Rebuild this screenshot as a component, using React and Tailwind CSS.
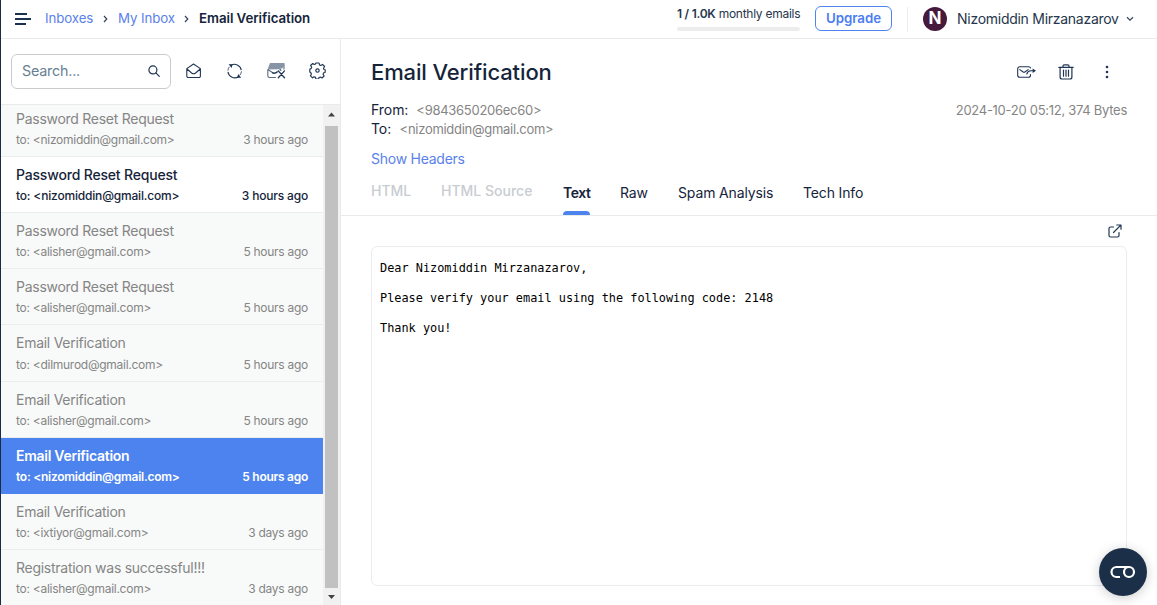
import React from "react";

const messages = [
  { subject: "Password Reset Request", to: "nizomiddin@gmail.com", time: "3 hours ago" },
  { subject: "Password Reset Request", to: "nizomiddin@gmail.com", time: "3 hours ago", state: "unread" },
  { subject: "Password Reset Request", to: "alisher@gmail.com", time: "5 hours ago" },
  { subject: "Password Reset Request", to: "alisher@gmail.com", time: "5 hours ago" },
  { subject: "Email Verification", to: "dilmurod@gmail.com", time: "5 hours ago" },
  { subject: "Email Verification", to: "alisher@gmail.com", time: "5 hours ago" },
  { subject: "Email Verification", to: "nizomiddin@gmail.com", time: "5 hours ago", state: "selected" },
  { subject: "Email Verification", to: "ixtiyor@gmail.com", time: "3 days ago" },
  { subject: "Registration was successful!!!", to: "alisher@gmail.com", time: "3 days ago" },
];

const rowStyles = {
  read: "bg-[#f8faf9] text-[#858585] border-[#ebedec] tracking-[-0.27px]",
  unread: "bg-white text-[#15243a] font-medium border-[#ebedec] tracking-[-0.18px]",
  selected: "bg-[#4c83ee] text-white font-semibold border-[#4c83ee] tracking-[-0.27px]",
};

function Icon({ size = 16, className = "", children, stroke = 1.1 }) {
  return (
    <svg width={size} height={size} viewBox={`0 0 ${size} ${size}`} fill="none" stroke="currentColor" strokeWidth={stroke} strokeLinecap="round" strokeLinejoin="round" className={`shrink-0 ${className}`}>
      {children}
    </svg>
  );
}

function Crumb() {
  return (
    <svg width="5" height="8" viewBox="0 0 5 8" fill="none" stroke="#34445a" strokeWidth="1.2" className="shrink-0">
      <path d="M1 1l2.8 3L1 7" />
    </svg>
  );
}

function Header() {
  return (
    <header className="flex h-[39px] shrink-0 items-center border-b border-[#e9eaeb] pl-3.5 pr-[23px] text-[13.3px]">
      <svg width="17" height="14" viewBox="0 0 17 14" fill="none" stroke="#1a3150" strokeWidth="1.9" className="shrink-0">
        <path d="M0 2h12M0 7h16M0 12h11" />
      </svg>
      <nav className="ml-[13px] flex items-center whitespace-nowrap pb-px">
        <a className="w-[49px] tracking-[-0.1px] text-[#5a82ea]">Inboxes</a>
        <span className="ml-[9px] flex w-[15px]"><Crumb /></span>
        <a className="w-[58px] tracking-[-0.1px] text-[#5a82ea]">My Inbox</a>
        <span className="ml-[8px] flex w-[15px]"><Crumb /></span>
        <span className="font-semibold tracking-[-0.06px] text-[#15243a]">Email Verification</span>
      </nav>
      <div className="ml-auto flex items-center whitespace-nowrap">
        <div className="mb-[3px] w-[123px]">
          <div className="text-xs leading-[18px] tracking-[-0.26px] text-[#26364b]"><b className="font-semibold">1 / 1.0K</b> monthly emails</div>
          <div className="mt-1 h-1 rounded-sm bg-[#ececed]" />
        </div>
        <button className="mb-[2px] ml-[15px] h-[25px] w-[77px] rounded-md border border-[#4c83ee] pt-px text-[13.3px] font-semibold leading-none tracking-[-0.05px] text-[#4c7df0]">Upgrade</button>
        <div className="ml-[15px] h-[25px] w-px bg-[#ececed]" />
        <div className="ml-[15px] flex size-6 items-center justify-center rounded-full bg-[#461a3d] text-[17px] font-bold text-white">N</div>
        <span className="ml-[10px] w-[162px] pb-px text-[14px] tracking-[-0.27px] text-[#26364b]">Nizomiddin Mirzanazarov</span>
        <svg width="8" height="6" viewBox="0 0 8 6" fill="none" stroke="#34445a" strokeWidth="1.2" className="ml-[7px]">
          <path d="M1 1.3l3 2.8 3-2.8" />
        </svg>
      </div>
    </header>
  );
}

function Toolbar() {
  return (
    <div className="flex h-[66px] shrink-0 items-center border-b border-[#e9eaeb] pb-px pl-[10px] text-[#1e3553]">
      <div className="flex h-[35px] w-[160px] items-center justify-between rounded-md border border-[#c9cbce] pl-[10px] pr-[10px]">
        <span className="text-[14.3px] tracking-[-0.2px] text-[#687f93]">Search...</span>
        <Icon size={12} stroke={1.2}>
          <circle cx="4.9" cy="4.9" r="4" />
          <path d="M7.9 7.9l3.4 3.4" />
        </Icon>
      </div>
      <Icon className="mb-px ml-[15px]">
        <path d="M.8 5.600L7.500 1l6.900 4.600V13a1.400 1.400 0 0 1-1.400 1.500H2.300A1.400 1.400 0 0 1 .8 13zM1 6l4.600 4q2 1.500 4 0L14.200 6" />
      </Icon>
      <Icon className="mb-px ml-[25px]">
        <path d="M4 2.300A6.800 6.800 0 0 1 14.200 6.800M11.500 13.700A6.800 6.800 0 0 1 1 9.200" />
        <path d="M.9 7.200a6.800 6.800 0 0 1 1.200-3M14.400 8.800a6.800 6.800 0 0 1-1.200 3" strokeWidth=".8" />
        <path d="M1.600 1.200h4L4.600 5zM14.200 14.800h-4.200L11.300 11z" fill="currentColor" stroke="none" />
      </Icon>
      <Icon size={19} className="ml-[24px]">
        <path d="M8.500 15.500H2.500A1.700 1.700 0 0 1 .8 13.800V8.400A1.700 1.700 0 0 1 2.500 6.700h9.700a1.700 1.700 0 0 1 1.700 1.700M1.200 7.800l4.500 3q1.500 1 3 0l4.800-3M17 2.600v5.400" stroke="#5b6c82" />
        <path d="M3 1h14.600l-.8 3.600-1.700 2H.9z" fill="#8794a5" stroke="none" />
        <path d="M11.300 8.900l6.200 6.900M17.500 8.900l-6.200 6.900" stroke="#fff" strokeWidth="3" />
        <path d="M5.500 10.700q1.700 1 3.500.1l1.500-1" strokeWidth="1.200" />
        <path d="M11.300 8.900l6.200 6.900M17.500 8.900l-6.200 6.900" strokeWidth="1.300" />
      </Icon>
      <Icon size={17} className="mb-px ml-[23px]" stroke={1.150}>
        <path d="M6.900 1h3.200l.4 1.900 1.300.6 1.700-1.100 2.100 2.100-1.100 1.700.5 1.300 1.200.3v1.500l-.1 1.200-1.400.3-.6 1.400 1 1.800-2.100 2-1.600-1-1.400.5-.4 1.600H6.900l-.4-1.700-1.400-.6-1.600 1-2.100-2.100 1-1.500-.5-1.500L.8 10V7l1.300-.4.6-1.300-1.100-1.800 2.100-2 1.600 1 1.200-.5z" />
        <circle cx="8.500" cy="8.500" r="1.700" />
      </Icon>
    </div>
  );
}

function Sidebar() {
  return (
    <aside className="flex w-[340px] shrink-0 flex-col border-r border-[#e9eaeb]">
      <Toolbar />
      <div className="flex min-h-0 flex-1 bg-[#f8faf9]">
        <div className="flex w-[322px] flex-col overflow-hidden">
          <div className="-mt-1">
            {messages.map((m, i) => (
              <div key={i} className={`h-[56.11px] border-b px-[15px] pt-[7px] ${rowStyles[m.state || "read"]}`}>
                <div className="text-sm leading-[21px] pb-[0.1px]">{m.subject}</div>
                <div className="flex justify-between text-xs leading-[21px]">
                  <span>to: &lt;{m.to}&gt;</span>
                  <span>{m.time}</span>
                </div>
              </div>
            ))}
          </div>
        </div>
        <div className="flex w-[17px] flex-col items-center bg-[#f1f1f1]">
          <svg width="17" height="21" viewBox="0 0 17 21" fill="#404040" className="shrink-0"><path d="M5 11.500h7L8.500 7.500z" /></svg>
          <div className="w-[13px] flex-1 bg-[#c1c1c1]" />
          <svg width="17" height="17" viewBox="0 0 17 17" fill="#404040" className="shrink-0"><path d="M5 7h7l-3.500 4z" /></svg>
        </div>
      </div>
    </aside>
  );
}

function Message() {
  return (
    <main className="flex min-w-0 flex-1 flex-col">
      <div className="flex h-[177px] flex-col border-b border-[#e9eaeb] px-[30px] text-[#15243a]">
        <div className="mt-[17px] flex h-8 items-center justify-between">
          <h1 className="text-[22px] font-medium tracking-[-0.12px]">Email Verification</h1>
          <div className="flex items-center text-[#1e3553]">
            <Icon size={20}>
              <path d="M14.500 12.500v.7a2 2 0 0 1-2 2H3.700a2 2 0 0 1-2-2V6.800a2 2 0 0 1 2-2h8.800q1.700 0 2 1.200M3.800 7.600l3 2.200q1.200.8 2.400 0l3-2.200M10.800 12q.9-3 4-3.200h3" />
              <path d="M16.600 6.500v4.600L20 8.800z" fill="currentColor" stroke="none" />
            </Icon>
            <Icon size={16} className="ml-[22px]" stroke={1.200}>
              <path d="M.8 3.300h14.400M5 3.100V2Q5 .8 6.200.8h3.600Q11 .8 11 2v1.100M2.100 3.500V13q0 2 2 2h7.800q2 0 2-2V3.500M5.500 6v6.200M8 6v6.200M10.500 6v6.200" />
            </Icon>
            <svg width="4" height="14" viewBox="0 0 4 14" fill="currentColor" className="ml-[31px] mr-[18px]">
              <circle cx="2" cy="2" r="1.300" /><circle cx="2" cy="7" r="1.300" /><circle cx="2" cy="12" r="1.300" />
            </svg>
          </div>
        </div>
        <div className="mt-[13px] flex justify-between text-[13px] leading-[19px] tracking-[-0.28px] text-[#858585]">
          <div>
            <div className="flex h-[19px]"><span className="-mt-px mr-[8px] text-[14px] tracking-[-0.05px] text-[#15243a]">From:</span>&lt;9843650206ec60&gt;</div>
            <div className="flex h-[19px]"><span className="-mt-px mr-[8.500px] text-[14px] tracking-[-0.1px] text-[#15243a]">To:</span>&lt;nizomiddin@gmail.com&gt;</div>
          </div>
          <div>2024-10-20 05:12, 374 Bytes</div>
        </div>
        <a className="mt-[10px] text-[14px] leading-5 tracking-[-0.25px] text-[#5a82ea]">Show Headers</a>
        <div className="mt-auto flex h-[46px] whitespace-nowrap text-[14px] leading-5 tracking-[-0.14px]">
          <span className="mt-[12px] w-[70px] font-medium tracking-normal text-[#c9ccd1]">HTML</span>
          <span className="mt-[12px] w-[122px] font-medium tracking-normal text-[#c9ccd1]">HTML Source</span>
          <span className="mr-[30px] flex w-[27px] flex-col justify-between pt-[14px] font-semibold tracking-[-0.4px]">
            Text
            <span className="h-1 rounded-t-sm bg-[#4c83ee]" />
          </span>
          <span className="mt-[14px] w-[58px]">Raw</span>
          <span className="mt-[14px] w-[125px]">Spam Analysis</span>
          <span className="mt-[14px]">Tech Info</span>
        </div>
      </div>
      <div className="flex h-[30px] shrink-0 items-center justify-end pr-[35px] text-[#1e3553]">
        <Icon size={14} stroke={1.200}>
          <path d="M5.500 3H2.500Q1 3 1 4.500V11.500Q1 13 2.500 13H9.500Q11 13 11 11.500V8.500M5.500 8.500L12.800 1.200M8.800 1h4.200v4.200" />
        </Icon>
      </div>
      <pre className="mx-[30px] h-[340px] rounded-md border border-[#ebecee] px-2 pt-[14px] font-['DejaVu_Sans_Mono',monospace] text-[11.88px] leading-[15px] text-black">
        {"Dear Nizomiddin Mirzanazarov,\n\nPlease verify your email using the following code: 2148\n\nThank you!"}
      </pre>
    </main>
  );
}

export default function App() {
  return (
    <div className="relative flex h-[605px] w-[1157px] flex-col overflow-hidden border-l border-[#1a2b42] bg-white font-['Inter',sans-serif]">
      <Header />
      <div className="flex min-h-0 flex-1">
        <Sidebar />
        <Message />
      </div>
      <button className="absolute bottom-[9px] right-[10px] flex size-12 items-center justify-center rounded-full bg-[#1b3048] shadow-[0_2px_12px_rgba(0,0,0,0.2)]">
        <svg width="26" height="14" viewBox="0 0 26 14" fill="none" stroke="#fff" strokeWidth="2.200">
          <path d="M10 12H6.500A5 5 0 0 1 6.500 2H19" />
          <circle cx="19" cy="7" r="5" />
        </svg>
      </button>
    </div>
  );
}
